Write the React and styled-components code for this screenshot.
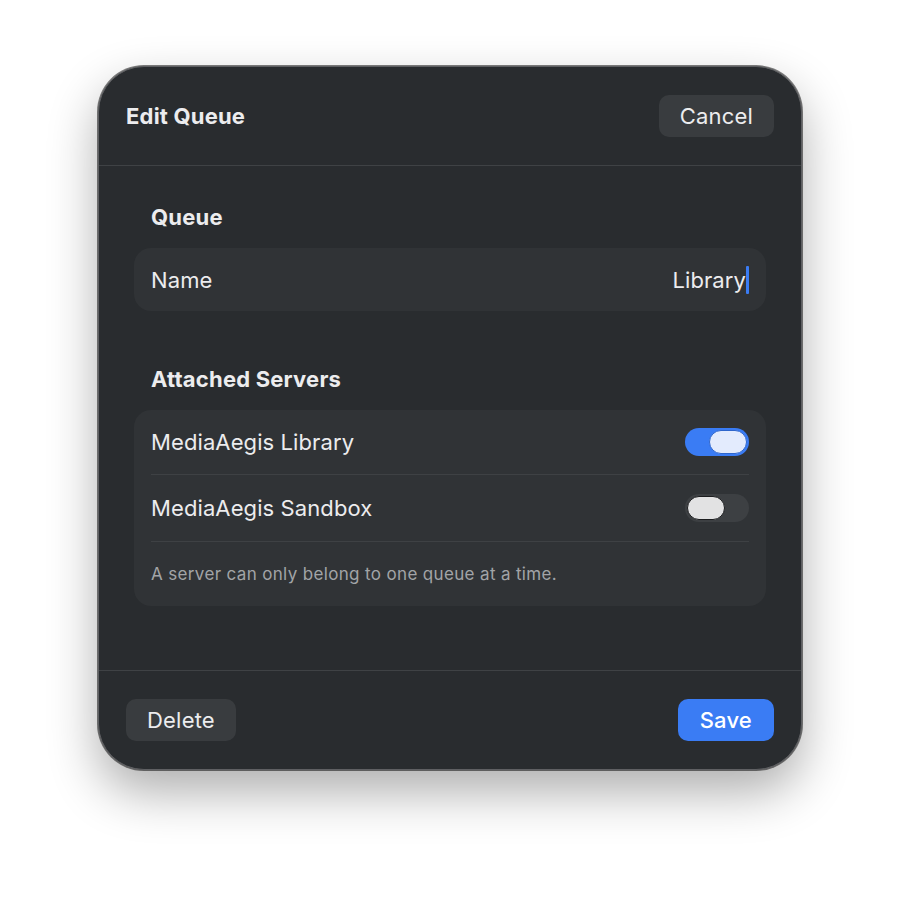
import { useState } from 'react'
import styled, { createGlobalStyle } from 'styled-components'

const GlobalStyle = createGlobalStyle`
  html, body {
    margin: 0;
    padding: 0;
    background: #ffffff;
    font-family: Inter, "Liberation Sans", sans-serif;
    -webkit-font-smoothing: antialiased;
  }
`

const Page = styled.div`
  width: 900px;
  height: 900px;
  display: flex;
  justify-content: center;
  padding-top: 66px;
  box-sizing: border-box;
`

const Dialog = styled.div`
  width: 704px;
  height: 704px;
  box-sizing: border-box;
  display: flex;
  flex-direction: column;
  background: #292c2f;
  border: 1.5px solid #5f6063;
  border-radius: 46px;
  box-shadow: 0 0 0 1px rgba(0, 0, 0, 0.5), 0 22px 50px rgba(0, 0, 0, 0.32);
  color: #ececee;
  overflow: hidden;
`

const Header = styled.div`
  height: 98px;
  flex-shrink: 0;
  display: flex;
  align-items: center;
  justify-content: space-between;
  padding: 0 27px 0 27px;
  border-bottom: 1px solid #3f4245;
`

const Title = styled.h1`
  margin: 0;
  font-size: 22px;
  font-weight: 700;
  letter-spacing: 0.2px;
  color: #ececee;
`

const Button = styled.button`
  height: 42px;
  padding: 0 ${p => p.$pad || 21}px;
  border: 0;
  border-radius: 10px;
  font-family: inherit;
  font-size: 22px;
  letter-spacing: 0.2px;
  font-weight: ${p => (p.$primary ? 500 : 400)};
  color: ${p => (p.$primary ? '#ffffff' : '#ececee')};
  background: ${p => (p.$primary ? '#3a7cf4' : '#393c3f')};
  cursor: pointer;
`

const Body = styled.div`
  flex: 1;
  display: flex;
  flex-direction: column;
  gap: 55px;
  padding: 38px 35px 0;
`

const Section = styled.section`
  display: flex;
  flex-direction: column;
  gap: 18px;
`

const SectionTitle = styled.h2`
  margin: 0 17px;
  font-size: 22px;
  line-height: 26px;
  font-weight: 700;
  letter-spacing: 0.2px;
  color: #ececee;
`

const Card = styled.div`
  background: #303336;
  border-radius: 17px;
  padding: 0 17px;
`

const Row = styled.div`
  height: ${p => p.$h || 64}px;
  display: flex;
  align-items: center;
  justify-content: space-between;
  font-size: 22px;
  letter-spacing: 0.1px;
  color: #ececee;
  & + & {
    border-top: 1px solid #3e4144;
  }
`

const Value = styled.span`
  display: flex;
  align-items: center;
  color: #ececee;
`

const Caret = styled.span`
  display: inline-block;
  width: 3px;
  height: 28px;
  border-radius: 1px;
  background: #3a7cf4;
`

const Note = styled.div`
  height: 64px;
  display: flex;
  align-items: center;
  border-top: 1px solid #3e4144;
  font-size: 17px;
  letter-spacing: 0.35px;
  color: #a2a4a7;
`

const Track = styled.button`
  position: relative;
  width: 64px;
  height: 28px;
  padding: 0;
  border: 0;
  border-radius: 14px;
  background: ${p => (p.$on ? '#3a7cf4' : '#3d4043')};
  cursor: pointer;
`

const Knob = styled.span`
  position: absolute;
  top: 2px;
  left: ${p => (p.$on ? 24 : 2)}px;
  width: 38px;
  height: 24px;
  border-radius: 12px;
  box-sizing: border-box;
  background: ${p => (p.$on ? '#e3ebfd' : '#e2e2e3')};
  border: 1px solid ${p => (p.$on ? '#2f66cc' : '#1c1d1f')};
`

const Toggle = ({ on, onChange }) =>
  <Track $on={on} onClick={() => onChange(!on)}>
    <Knob $on={on} />
  </Track>

const Footer = styled.div`
  height: 98px;
  flex-shrink: 0;
  display: flex;
  align-items: center;
  justify-content: space-between;
  padding: 0 27px;
  border-top: 1px solid #3f4245;
`

function App () {
  const [servers, setServers] = useState({ library: true, sandbox: false })

  return (
    <>
      <GlobalStyle />
      <Page>
        <Dialog>
          <Header>
            <Title>Edit Queue</Title>
            <Button>Cancel</Button>
          </Header>
          <Body>
            <Section>
              <SectionTitle>Queue</SectionTitle>
              <Card>
                <Row $h={63}>
                  <span>Name</span>
                  <Value>Library<Caret /></Value>
                </Row>
              </Card>
            </Section>
            <Section>
              <SectionTitle>Attached Servers</SectionTitle>
              <Card>
                <Row>
                  <span>MediaAegis Library</span>
                  <Toggle on={servers.library} onChange={v => setServers({ ...servers, library: v })} />
                </Row>
                <Row $h={66}>
                  <span>MediaAegis Sandbox</span>
                  <Toggle on={servers.sandbox} onChange={v => setServers({ ...servers, sandbox: v })} />
                </Row>
                <Note>A server can only belong to one queue at a time.</Note>
              </Card>
            </Section>
          </Body>
          <Footer>
            <Button>Delete</Button>
            <Button $primary $pad={22}>Save</Button>
          </Footer>
        </Dialog>
      </Page>
    </>
  )
}

export default App
